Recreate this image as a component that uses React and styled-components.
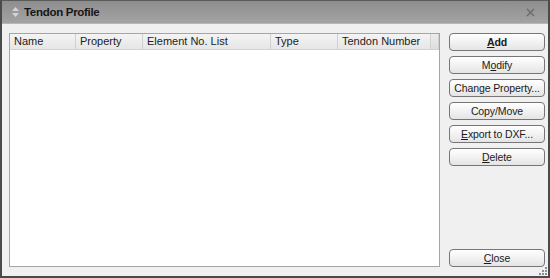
import React from "react";
import styled, { createGlobalStyle } from "styled-components";

const GlobalStyle = createGlobalStyle`
  html, body {
    margin: 0;
    padding: 0;
    background: #ffffff;
  }
  * {
    box-sizing: border-box;
  }
`;

const Window = styled.div`
  width: 550px;
  height: 278px;
  display: flex;
  flex-direction: column;
  border: 2px solid #4a4a4a;
  border-top: 1px solid #5a5a5a;
  background: #f0f0f0;
  font-family: "Liberation Sans", Arial, sans-serif;
  font-size: 11px;
  color: #000;
  position: relative;
`;

const TitleBar = styled.div`
  height: 23px;
  flex: none;
  display: flex;
  align-items: center;
  padding: 0 8px 0 10px;
  background: linear-gradient(#8e8e8e, #a3a3a3);
  border-bottom: 1px solid #b8b8b8;
`;

const TitleIcon = styled.svg`
  width: 7px;
  height: 10px;
  margin-right: 5px;
`;

const Title = styled.span`
  flex: 1;
  font-weight: bold;
  font-size: 11.5px;
  letter-spacing: -0.3px;
  color: #161616;
`;

const CloseX = styled.svg`
  width: 9px;
  height: 9px;
  margin-right: 5px;
`;

const Body = styled.div`
  flex: 1;
  display: flex;
  gap: 9px;
  padding: 9px 3px 9px 7px;
`;

const List = styled.div`
  flex: 1;
  background: #ffffff;
  border: 1px solid #a5a5a5;
  display: flex;
  flex-direction: column;
`;

const HeaderRow = styled.div`
  display: flex;
  height: 16px;
  background: linear-gradient(#f4f4f4, #e6e6e6);
  border-bottom: 1px solid #d2d2d2;
`;

const HeaderCell = styled.div`
  width: ${(p) => p.$w}px;
  flex: ${(p) => (p.$fill ? 1 : "none")};
  padding-left: 4px;
  line-height: 15px;
  color: #222;
  border-right: 1px solid #d0d0d0;
  white-space: nowrap;
  overflow: hidden;
  background: ${(p) => (p.$fill ? "linear-gradient(#ececec, #dedede)" : "transparent")};
`;

const ButtonColumn = styled.div`
  width: 96px;
  display: flex;
  flex-direction: column;
  gap: 5px;
`;

const Button = styled.button`
  height: 18px;
  width: 100%;
  padding: 0;
  border: 1px solid #767676;
  border-radius: 4px;
  background: linear-gradient(#ffffff, #f2f2f2 50%, #e4e4e4);
  font-family: inherit;
  font-size: 10.5px;
  letter-spacing: -0.1px;
  font-weight: ${(p) => (p.$bold ? "bold" : "normal")};
  color: #1a1a1a;
  white-space: nowrap;
  margin-top: ${(p) => (p.$bottom ? "auto" : "0")};
  u {
    text-decoration: underline;
  }
`;

const Grip = styled.svg`
  position: absolute;
  right: 1px;
  bottom: 1px;
  width: 8px;
  height: 8px;
`;

const columns = [
  { label: "Name", w: 66 },
  { label: "Property", w: 67 },
  { label: "Element No. List", w: 128 },
  { label: "Type", w: 67 },
  { label: "Tendon Number", w: 93 },
];

export default function App() {
  return (
    <>
      <GlobalStyle />
      <Window>
        <TitleBar>
          <TitleIcon viewBox="0 0 7 10">
            <path d="M3.5 0 L7 4 H0 Z" fill="#d4d4d4" />
            <path d="M3.5 10 L7 6 H0 Z" fill="#d4d4d4" />
          </TitleIcon>
          <Title>Tendon Profile</Title>
          <CloseX viewBox="0 0 9 9">
            <path d="M1 1 L8 8 M8 1 L1 8" stroke="#6a6a6a" strokeWidth="1.4" />
          </CloseX>
        </TitleBar>
        <Body>
          <List>
            <HeaderRow>
              {columns.map((c) => (
                <HeaderCell key={c.label} $w={c.w}>
                  {c.label}
                </HeaderCell>
              ))}
              <HeaderCell $fill />
            </HeaderRow>
          </List>
          <ButtonColumn>
            <Button $bold>
              <u>A</u>dd
            </Button>
            <Button>
              M<u>o</u>dify
            </Button>
            <Button>Change Property...</Button>
            <Button>Copy/Move</Button>
            <Button>
              <u>E</u>xport to DXF...
            </Button>
            <Button>
              <u>D</u>elete
            </Button>
            <Button $bottom>
              <u>C</u>lose
            </Button>
          </ButtonColumn>
        </Body>
        <Grip viewBox="0 0 8 8">
          {[
            [6, 0],
            [6, 3],
            [3, 3],
            [6, 6],
            [3, 6],
            [0, 6],
          ].map(([x, y]) => (
            <rect key={`${x}-${y}`} x={x} y={y} width="2" height="2" fill="#8a8aa0" />
          ))}
        </Grip>
      </Window>
    </>
  );
}
